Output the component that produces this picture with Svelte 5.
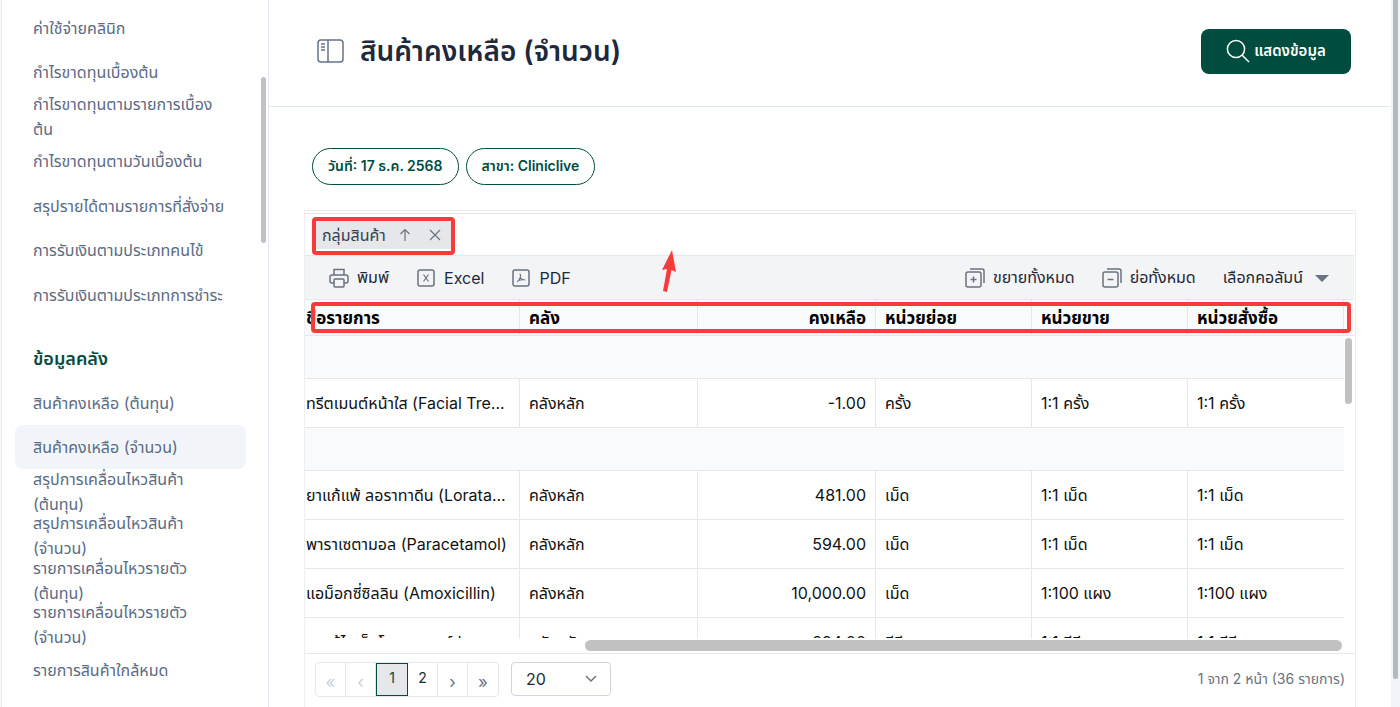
<script>
  const reports = [
    'ค่าใช้จ่ายคลินิก',
    'กำไรขาดทุนเบื้องต้น',
    'กำไรขาดทุนตามรายการเบื้องต้น',
    'กำไรขาดทุนตามวันเบื้องต้น',
    'สรุปรายได้ตามรายการที่สั่งจ่าย',
    'การรับเงินตามประเภทคนไข้',
    'การรับเงินตามประเภทการชำระ'
  ];

  const stock = [
    'สินค้าคงเหลือ (ต้นทุน)',
    'สินค้าคงเหลือ (จำนวน)',
    'สรุปการเคลื่อนไหวสินค้า (ต้นทุน)',
    'สรุปการเคลื่อนไหวสินค้า (จำนวน)',
    'รายการเคลื่อนไหวรายตัว (ต้นทุน)',
    'รายการเคลื่อนไหวรายตัว (จำนวน)',
    'รายการสินค้าใกล้หมด',
    'รายการสินค้าใกล้หมดอายุ'
  ];

  const rows = [
    { group: true },
    { name: 'ทรีตเมนต์หน้าใส (Facial Tre...', store: 'คลังหลัก', qty: '-1.00', sub: 'ครั้ง', sale: '1:1 ครั้ง', order: '1:1 ครั้ง' },
    { group: true },
    { name: 'ยาแก้แพ้ ลอราทาดีน (Lorata...', store: 'คลังหลัก', qty: '481.00', sub: 'เม็ด', sale: '1:1 เม็ด', order: '1:1 เม็ด' },
    { name: 'พาราเซตามอล (Paracetamol)', store: 'คลังหลัก', qty: '594.00', sub: 'เม็ด', sale: '1:1 เม็ด', order: '1:1 เม็ด' },
    { name: 'แอม็อกซี่ซิลลิน (Amoxicillin)', store: 'คลังหลัก', qty: '10,000.00', sub: 'เม็ด', sale: '1:100 แผง', order: '1:100 แผง' },
    { name: 'ยาแก้ไอเด็กโบรเมดคอร์ป', store: 'คลังหลัก', qty: '294.00', sub: 'ซีซี', sale: '1:1 ซีซี', order: '1:1 ซีซี' }
  ];

  let active = $state('สินค้าคงเหลือ (จำนวน)');
  let page = $state(1);
  let pageSize = $state('20');
</script>

<div class="app">
  <aside class="sidebar">
    <nav>
      {#each reports as label}
        <a href="#report" class:active={active === label} onclick={() => (active = label)}>{label}</a>
      {/each}
    </nav>
    <h2>ข้อมูลคลัง</h2>
    <nav>
      {#each stock as label}
        <a href="#stock" class:active={active === label} onclick={() => (active = label)}>{label}</a>
      {/each}
    </nav>
    <div class="thumb side-thumb"></div>
  </aside>

  <main>
    <header>
      <button class="icon-btn" aria-label="เมนู">
        <svg width="28" height="24" viewBox="0 0 28 24" fill="none" stroke="#64748b" stroke-width="1.5">
          <rect x="1" y="1" width="25" height="22" rx="3" />
          <path d="M11 1v22M4 5h4M4 8h4M4 11h4" />
        </svg>
      </button>
      <h1>สินค้าคงเหลือ (จำนวน)</h1>
      <button class="primary">
        <svg width="24" height="24" viewBox="0 0 24 24" fill="none" stroke="#fff" stroke-width="1.5">
          <circle cx="10" cy="10" r="8.6" />
          <path d="M16 16l7 7" />
        </svg>
        แสดงข้อมูล
      </button>
    </header>

    <div class="content">
      <div class="chips">
        <button>วันที่: 17 ธ.ค. 2568</button>
        <button>สาขา: Cliniclive</button>
      </div>

      <section class="panel">
        <div class="grouping">
          <div class="group-chip">
            <span>กลุ่มสินค้า</span>
            <button aria-label="เรียงลำดับ">
              <svg width="14" height="14" viewBox="0 0 14 14" fill="none" stroke="#6b7280" stroke-width="1.2"><path d="M7 13V1.5M2.5 6L7 1.5L11.5 6" /></svg>
            </button>
            <button class="remove" aria-label="ลบ">
              <svg width="14" height="14" viewBox="0 0 14 14" fill="none" stroke="#6b7280" stroke-width="1.2"><path d="M2 2l10 10M12 2L2 12" /></svg>
            </button>
          </div>
        </div>

        <div class="toolbar">
          <button>
            <svg width="20" height="20" viewBox="0 0 20 20" fill="none" stroke="#6b7280" stroke-width="1.5">
              <path d="M5 7V1.5h10V7M5 15H3a2 2 0 0 1-2-2V9a2 2 0 0 1 2-2h14a2 2 0 0 1 2 2v4a2 2 0 0 1-2 2h-2" />
              <rect x="5" y="11" width="10" height="8" rx="1" />
            </svg>
            พิมพ์
          </button>
          <button>
            <svg width="20" height="20" viewBox="0 0 20 20" fill="none" stroke="#6b7280" stroke-width="1.5">
              <rect x="2" y="2" width="16" height="16" rx="2" />
              <path d="M7.500 6.500l5 7M12.500 6.500l-5 7" stroke-width="1.2" />
            </svg>
            Excel
          </button>
          <button>
            <svg width="20" height="20" viewBox="0 0 20 20" fill="none" stroke="#6b7280" stroke-width="1.5">
              <rect x="2" y="2" width="16" height="16" rx="2" />
              <path d="M8.500 6c1.500 0 1 2 .8 3.200C8.800 11 7.500 13 6 14M9.300 9.500c1 1.500 2.500 2.500 5 2.500M7.500 12.500c1.500-.6 3-.9 4.500-.8" stroke-width="1.1" />
            </svg>
            PDF
          </button>
          <span class="spacer"></span>
          <button>
            <svg width="20" height="20" viewBox="0 0 20 20" fill="none" stroke="#6b7280" stroke-width="1.5">
              <rect x="1" y="4" width="15" height="15" rx="2" />
              <path d="M5 1h12a2 2 0 0 1 2 2v12M5.500 11.500h6M8.500 8.500v6" />
            </svg>
            ขยายทั้งหมด
          </button>
          <button>
            <svg width="20" height="20" viewBox="0 0 20 20" fill="none" stroke="#6b7280" stroke-width="1.5">
              <rect x="1" y="4" width="15" height="15" rx="2" />
              <path d="M5 1h12a2 2 0 0 1 2 2v12M5.500 11.500h6" />
            </svg>
            ย่อทั้งหมด
          </button>
          <button class="columns">
            เลือกคอลัมน์
            <svg width="14" height="8" viewBox="0 0 14 8" fill="#6b7280"><path d="M0 1h14L7 8z" /></svg>
          </button>
        </div>

        <div class="table-wrap">
          <table>
            <colgroup>
              <col />
              <col class="wide" />
              <col class="wide" />
              <col class="unit" />
              <col class="unit" />
              <col class="unit" />
              <col class="gutter" />
            </colgroup>
            <thead>
              <tr>
                <th class="name">ชื่อรายการ</th>
                <th>คลัง</th>
                <th class="num">คงเหลือ</th>
                <th>หน่วยย่อย</th>
                <th>หน่วยขาย</th>
                <th>หน่วยสั่งซื้อ</th>
                <th class="end"></th>
              </tr>
            </thead>
            <tbody>
              {#each rows as row}
                {#if row.group}
                  <tr class="group"><td colspan="6"></td><td class="end"></td></tr>
                {:else}
                  <tr>
                    <td class="name">{row.name}</td>
                    <td>{row.store}</td>
                    <td class="num">{row.qty}</td>
                    <td>{row.sub}</td>
                    <td>{row.sale}</td>
                    <td class="last">{row.order}</td>
                    <td class="end"></td>
                  </tr>
                {/if}
              {/each}
            </tbody>
          </table>
          <div class="thumb table-thumb"></div>
        </div>
        <div class="h-scroll"><div class="h-thumb"></div></div>

        <footer>
          <div class="pager">
            <button disabled aria-label="หน้าแรก">«</button>
            <button disabled aria-label="ก่อนหน้า">‹</button>
            <button class="num-btn" class:current={page === 1} onclick={() => (page = 1)}>1</button>
            <button class="num-btn" class:current={page === 2} onclick={() => (page = 2)}>2</button>
            <button aria-label="ถัดไป">›</button>
            <button aria-label="หน้าสุดท้าย">»</button>
          </div>
          <div class="size">
            <select bind:value={pageSize} aria-label="จำนวนต่อหน้า">
              <option>10</option>
              <option>20</option>
              <option>50</option>
            </select>
            <svg width="12" height="8" viewBox="0 0 12 8" fill="none" stroke="#6b7280" stroke-width="1.5"><path d="M1 1l5 5 5-5" /></svg>
          </div>
          <span class="info">1 จาก 2 หน้า (36 รายการ)</span>
        </footer>

        <div class="mark mark-group"></div>
        <div class="mark mark-head"></div>
        <svg class="arrow" width="16" height="42" viewBox="0 0 16 42" fill="#f73b3b"><path d="M10 0L14 22L9.500 20L5 42L1 41L5 19L0 20z" /></svg>
      </section>
    </div>
  </main>

  <div class="page-scroll"><div class="page-thumb"></div></div>
</div>

<style>
  :global(body) {
    background: #fff;
    font-family: Inter, "Noto Sans Thai", "Leelawadee UI", Loma, sans-serif;
  }

  * {
    box-sizing: border-box;
  }

  button {
    font: inherit;
    color: inherit;
    background: none;
    border: 0;
    padding: 0;
    cursor: pointer;
  }

  svg {
    flex: none;
    display: block;
  }

  .app {
    display: flex;
    height: 100vh;
    overflow: hidden;
    padding-left: 1px;
    background: #f8fafc;
  }

  .sidebar {
    position: relative;
    flex: none;
    width: 268px;
    padding: 6px 22px 0 13px;
    overflow: hidden;
    background: #fff;
    border-left: 1px solid #e2e8f0;
    border-right: 1px solid #e2e8f0;
  }

  .sidebar a {
    display: flex;
    align-items: center;
    height: 44px;
    padding: 0 18px;
    border-radius: 8px;
    color: #5b6b84;
    font-size: 16px;
    line-height: 25px;
    text-decoration: none;
  }

  .sidebar a:nth-child(even) {
    margin-bottom: 1px;
  }

  .sidebar a.active {
    background: #f1f5f9;
  }

  .sidebar h2 {
    margin: 29px 0 10px;
    padding: 0 18px;
    color: #064e3b;
    font-size: 18px;
    font-weight: 600;
    line-height: 25px;
  }

  .thumb {
    position: absolute;
    border-radius: 4px;
    background: #c1c1c1;
  }

  .side-thumb {
    top: 77px;
    right: 2px;
    width: 5px;
    height: 166px;
  }

  main {
    flex: 1;
    min-width: 0;
    display: flex;
    flex-direction: column;
    background: #fff;
  }

  header {
    display: flex;
    align-items: center;
    flex: none;
    height: 107px;
    padding: 0 40px 4px 48px;
    border-bottom: 1px solid #e2e8f0;
  }

  h1 {
    flex: 1;
    margin: 0 0 0 15px;
    color: #1e293b;
    font-size: 28px;
    font-weight: 600;
    line-height: 36px;
  }

  .primary {
    display: flex;
    align-items: center;
    justify-content: center;
    gap: 4px;
    width: 150px;
    height: 45px;
    border-radius: 8px;
    background: #004d40;
    color: #fff;
    font-size: 15px;
    font-weight: 600;
  }

  .content {
    flex: 1;
    min-height: 0;
    display: flex;
    flex-direction: column;
    padding: 41px 35px 0;
  }

  .chips {
    display: flex;
    gap: 7px;
    padding: 0 8px;
    margin-bottom: 25px;
  }

  .chips button {
    height: 37px;
    padding: 0 15px;
    border: 1px solid #004d40;
    border-radius: 19px;
    color: #004d40;
    font-size: 14px;
    font-weight: 600;
  }

  .panel {
    position: relative;
    flex: 1;
    min-height: 0;
    display: flex;
    flex-direction: column;
    border: 1px solid #eceef1;
    border-bottom: 0;
    padding: 2px 1px 0 0;
  }

  .grouping {
    height: 43px;
    padding: 7px 10px;
    border-top: 1px solid #e5e7eb;
    border-bottom: 1px solid #e5e7eb;
  }

  .group-chip {
    display: inline-flex;
    align-items: center;
    gap: 12px;
    height: 28px;
    padding: 0 9px 0 7px;
    background: #e5e7eb;
    color: #374151;
    font-size: 16px;
    line-height: 26px;
  }

  .remove {
    margin-left: 4px;
  }

  .toolbar {
    display: flex;
    align-items: center;
    flex: none;
    gap: 27px;
    height: 43px;
    padding: 0 25px 0 24px;
    background: #f3f4f6;
    color: #1f2937;
    font-size: 16px;
  }

  .toolbar button {
    display: flex;
    align-items: center;
    gap: 8px;
  }

  .toolbar .columns {
    gap: 12px;
  }

  .spacer {
    flex: 1;
  }

  .table-wrap {
    position: relative;
    flex: none;
    height: 339px;
    overflow: hidden;
  }

  table {
    width: 100%;
    table-layout: fixed;
    border-collapse: separate;
    border-spacing: 0;
    color: #111;
    font-size: 16px;
  }

  .wide {
    width: 178px;
  }

  .unit {
    width: 156px;
  }

  .gutter {
    width: 10px;
  }

  th,
  td {
    height: 49px;
    padding: 0 9px;
    border-right: 1px solid #e5e7eb;
    border-bottom: 1px solid #e5e7eb;
    text-align: left;
    line-height: 24px;
    white-space: nowrap;
  }

  th {
    height: 37px;
    background: #f9fafb;
    border-top: 1px solid #e5e7eb;
    color: #000;
    font-weight: 700;
    font-size: 17px;
  }

  .name {
    padding: 0 0 0 1px;
  }

  .num {
    text-align: right;
  }

  .group td {
    height: 43px;
    background: #f9fafb;
    border-right: 0;
  }

  td.last {
    border-right: 0;
  }

  .end {
    padding: 0;
    border-right: 0;
  }

  td.end,
  .group td.end {
    background: #fff;
    border-bottom: 0;
  }

  .table-thumb {
    top: 39px;
    right: 2px;
    width: 7px;
    height: 66px;
  }

  .h-scroll {
    flex: none;
    height: 16px;
    padding: 2px 12px 0 280px;
    border-bottom: 1px solid #e5e7eb;
  }

  .h-thumb {
    height: 11px;
    border-radius: 6px;
    background: #c1c1c1;
  }

  footer {
    display: flex;
    flex: none;
    align-items: flex-start;
    gap: 12px;
    padding: 8px 9px 0 10px;
  }

  .pager {
    display: flex;
    height: 35px;
    border: 1px solid #e5e7eb;
    border-radius: 4px;
  }

  .pager button {
    width: 30px;
    border-right: 1px solid #e5e7eb;
    padding-top: 4px;
    color: #6b7280;
    font-size: 17px;
  }

  .pager button:last-child {
    border-right: 0;
  }

  .pager button:disabled {
    color: #cbd0d8;
  }

  .pager .num-btn {
    padding: 0 0 4px;
    color: #1f2937;
    font-size: 14px;
  }

  .pager .num-btn.current {
    width: 32px;
    height: 33px;
    border: 1px solid #004d40;
    background: #e5e7eb;
    color: #004d40;
  }

  .size {
    display: grid;
    align-items: center;
  }

  .size select {
    grid-area: 1 / 1;
    appearance: none;
    width: 100px;
    height: 34px;
    padding: 0 14px;
    border: 1px solid #d1d5db;
    border-radius: 4px;
    background: #fff;
    color: #1f2937;
    font: inherit;
    font-size: 16px;
  }

  .size svg {
    grid-area: 1 / 1;
    justify-self: end;
    margin-right: 14px;
    pointer-events: none;
  }

  .info {
    margin-left: auto;
    color: #6b7280;
    font-size: 14px;
    line-height: 34px;
  }

  .mark {
    position: absolute;
    border: 4px solid #f73b3b;
    border-radius: 4px;
    pointer-events: none;
  }

  .mark-group {
    top: 6px;
    left: 7px;
    width: 143px;
    height: 38px;
  }

  .mark-head {
    top: 91px;
    left: 6px;
    right: 4px;
    height: 31px;
  }

  .arrow {
    position: absolute;
    top: 39px;
    left: 357px;
  }

  .page-scroll {
    flex: none;
    width: 9px;
    padding-right: 2px;
    padding-left: 2px;
    background: #f1f5f9;
  }

  .page-thumb {
    height: 96%;
    border-radius: 0 0 3px 3px;
    background: #b4b9bd;
  }
</style>
